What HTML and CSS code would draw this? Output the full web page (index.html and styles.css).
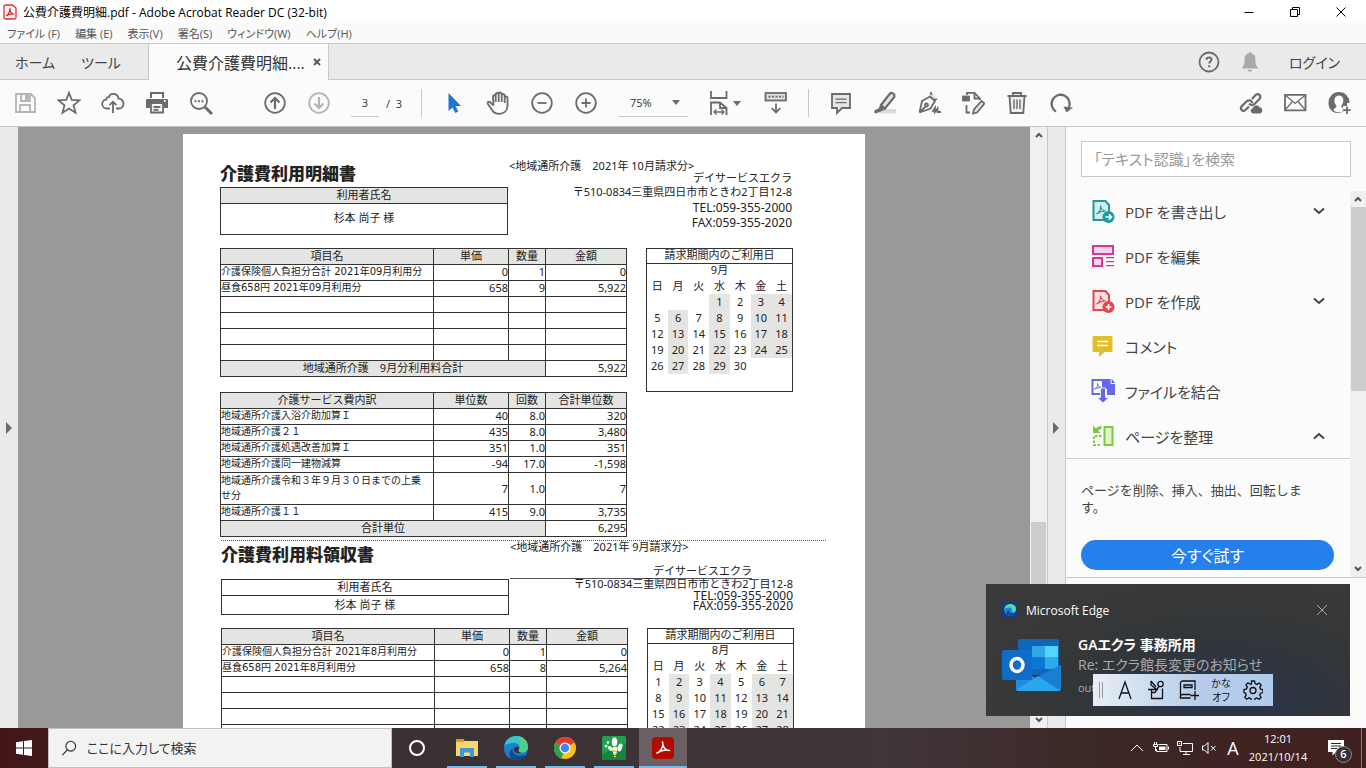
FILE: index.html
```html
<!DOCTYPE html>
<html lang="ja">
<head>
  <meta charset="UTF-8">
  <title>公費介護費明細.pdf - Adobe Acrobat Reader DC (32-bit)</title>
  <link rel="stylesheet" href="styles.css">
</head>
<body>
  <header class="titlebar">
    <svg class="app-icon" viewBox="0 0 14 16"><path d="M2.500 1h7L13 4v9.500a1.500 1.500 0 0 1-1.500 1.500h-9A1.500 1.500 0 0 1 1 13.500v-11A1.500 1.500 0 0 1 2.500 1z" fill="#fff4f2" stroke="#d8352c" stroke-width="1.300"/><path d="M3.300 11.800C5 11 7 7.500 7 4.500c0 3 1.500 5.500 4 5.500-2.500-.3-5.500.3-7.700 1.800z" fill="none" stroke="#d8251c" stroke-width="1.200" stroke-linejoin="round"/></svg>
    <h1 class="window-title">公費介護費明細.pdf - Adobe Acrobat Reader DC (32-bit)</h1>
    <div class="window-buttons">
      <button aria-label="最小化"><svg viewBox="0 0 12 12"><path d="M1.500 6.500h9"/></svg></button>
      <button aria-label="元に戻す"><svg viewBox="0 0 12 12"><path d="M1.500 3.500h7v7h-7zM3.500 3.500v-2h7v7h-2"/></svg></button>
      <button aria-label="閉じる"><svg viewBox="0 0 12 12"><path d="M1.500 1.500l9 9M10.500 1.500l-9 9"/></svg></button>
    </div>
  </header>

  <nav class="menubar">
    <button>ファイル (F)</button>
    <button>編集 (E)</button>
    <button>表示(V)</button>
    <button>署名(S)</button>
    <button>ウィンドウ(W)</button>
    <button>ヘルプ(H)</button>
  </nav>

  <nav class="tabbar">
    <button class="tab tab-home">ホーム</button>
    <button class="tab tab-tools">ツール</button>
    <div class="tab-active">
      <button class="tab">公費介護費明細....</button>
      <button class="tab-close" aria-label="タブを閉じる"><svg viewBox="0 0 8 8"><path d="M1 1l6 6M7 1L1 7" stroke="#5a5a5a" stroke-width="2"/></svg></button>
    </div>
    <div class="tab-right">
      <button class="round" aria-label="ヘルプ"><svg viewBox="0 0 24 24"><circle cx="12" cy="12" r="9.500" fill="none" stroke="#6b6b6b" stroke-width="1.800"/><path d="M9.500 9.800c0-3.200 5-3 5-.2 0 1.900-2.300 1.900-2.300 4" fill="none" stroke="#6b6b6b" stroke-width="2"/><rect x="11.200" y="15.200" width="2" height="2" fill="#6b6b6b"/></svg></button>
      <button class="round" aria-label="通知"><svg viewBox="0 0 24 24"><path d="M12 2a1.500 1.500 0 0 1 1.500 1.600C17 4.500 17.500 7 17.500 11c0 4 .8 4.500 2.300 6.500v1H4.200v-1C5.700 15.500 6.500 15 6.500 11c0-4 .5-6.500 4-7.400A1.500 1.500 0 0 1 12 2zM9.800 19.800h4.400a2.200 2 0 0 1-4.400 0z" fill="#a9a9a9"/></svg></button>
      <button class="login">ログイン</button>
    </div>
  </nav>

  <div class="toolbar">
    <div class="tools tools-file">
      <button aria-label="保存" class="dim"><svg viewBox="0 0 24 24"><path d="M3 3h15l4 4v14H3zM8 3v7h9V3M7 21v-7h10v7"/><path d="M13 4h2v4h-2z" class="solid"/></svg></button>
      <button aria-label="お気に入り"><svg viewBox="0 0 24 24"><path d="M12 1.800l2.800 7.200 7.700.4-6 4.900 2 7.500-6.500-4.200-6.500 4.200 2-7.500-6-4.900 7.700-.4z"/></svg></button>
      <button aria-label="アップロード"><svg viewBox="0 0 24 24"><path d="M9 17.500H6a4.500 4.500 0 0 1-.6-9C5.400 6.500 7 5.700 8 6c1-4.500 9-4.500 9.500 1.700 6.500-.2 6.500 9.800.5 9.800h-3M12 22v-11M8.500 14.200L12 10.700l3.500 3.500"/></svg></button>
      <button aria-label="印刷"><svg viewBox="0 0 24 24"><path d="M5 1h14v6h-2V3H7v4H5zM2 8h20a1 1 0 0 1 1 1v8h-4v-4H5v4H1V9a1 1 0 0 1 1-1z" class="solid nostroke"/><path d="M6 13v8.500h12V13M8.500 16h7M8.500 18.800h5"/><path d="M19 10h1.500" stroke="#fff"/></svg></button>
      <button aria-label="検索"><svg viewBox="0 0 24 24"><circle cx="10" cy="10" r="8"/><path d="M16 16l7 7" stroke-width="3"/><path d="M5.500 9.200h2v2h-2zM9 9.200h2v2H9zM12.500 9.200h2v2h-2z" class="solid nostroke"/></svg></button>
    </div>
    <div class="tools tools-page">
      <button aria-label="前のページ"><svg viewBox="0 0 24 24"><circle cx="12" cy="12" r="9.800"/><path d="M12 18V7M7.500 11.500L12 7l4.500 4.500" stroke-width="2.200"/></svg></button>
      <button aria-label="次のページ" class="dim"><svg viewBox="0 0 24 24"><circle cx="12" cy="12" r="9.800"/><path d="M12 6v11M7.500 12.500L12 17l4.500-4.500" stroke-width="2.200"/></svg></button>
      <input class="page-input" type="text" value="3" aria-label="ページ番号">
      <span class="page-total">/&nbsp; 3</span>
    </div>
    <div class="tools tools-view">
      <button aria-label="選択"><svg viewBox="0 0 24 24"><path d="M6.500 2v18l4-3.600 2.800 5.600 3-1.400-2.800-5.500h5.500z" fill="#1f75cf" stroke="none"/></svg></button>
      <button aria-label="手のひら"><svg viewBox="0 0 24 24"><path d="M7.500 14.500L4 11.200c-1.500-1.200-3.200.3-2 2l4.500 6.300c1.200 2.200 3.500 3.300 6.500 3.300 5 0 8.500-3 8.500-8V7c0-2-2.800-2-2.800 0v5M18.700 12V4.500c0-2-3-2-3 0V11M15.700 4.500V3c0-2-3-2-3 0v8M12.700 3.500c0-2-3-2-3 0V11M9.700 5.500c0-1.800-2.700-1.800-2.700 0l.5 9"/></svg></button>
      <button aria-label="縮小"><svg viewBox="0 0 24 24"><circle cx="12" cy="12" r="9.800"/><path d="M7.500 12h9"/></svg></button>
      <button aria-label="拡大"><svg viewBox="0 0 24 24"><circle cx="12" cy="12" r="9.800"/><path d="M7.500 12h9M12 7.500v9"/></svg></button>
      <div class="zoom-box">
        <select class="zoom-select" aria-label="倍率"><option>75%</option></select>
        <svg class="caret" viewBox="0 0 8 5"><path d="M0 0h8L4 5z"/></svg>
      </div>
      <button class="fit" aria-label="幅に合わせる"><svg viewBox="0 0 24 24"><path d="M4 0v7h15.500V0M4 24V11.500h9l6.500 5.500v7M13 11.500V17h6.500"/><path d="M7 21h10M9.500 18.500L7 21l2.500 2.500M14.500 18.500L17 21l-2.500 2.500" stroke-width="1.300"/></svg><svg class="caret" viewBox="0 0 8 5"><path d="M0 0h8L4 5z"/></svg></button>
      <button class="keys" aria-label="ツールバー"><svg viewBox="0 0 24 24"><rect x="1.500" y="2" width="20.500" height="7.500" fill="#ddd"/><path d="M4.500 5.700h15" stroke-dasharray="2 1.500"/><path d="M12 12.500V21M7.800 17.200L12 21.500l4.200-4.300"/></svg></button>
    </div>
    <div class="tools tools-edit">
      <button aria-label="コメント"><svg viewBox="0 0 24 24"><path d="M3 3h18v14h-8l-5 5v-5H3z" fill="#e6e6e6"/><path d="M6.500 8.200h11M6.500 11.700h11" stroke-width="1.300"/></svg></button>
      <button aria-label="ハイライト"><svg viewBox="0 0 24 24"><path d="M11 18h12v4.500H6z" fill="#dadada" stroke="none"/><path d="M8 14L17 2.500c2-1.500 5 .7 4.500 3.200L12 17.500z" fill="#e6e6e6" stroke-width="2.200"/><path d="M7.500 13.500l5.500 4.200-4.500 2.500-5 2H1.500v-3l4-1.700z" class="solid nostroke"/></svg></button>
      <button aria-label="署名"><svg viewBox="0 0 24 24"><path d="M13.500 1.500l6.500 6.500-3 2-5.500-5z" fill="#ddd" stroke="none"/><path d="M2.500 21.500L5 10l8-4.500 5 4.500-4.500 7.500-11 4L9 15M13.500 1l1.200 3M20 8l-3 1"/><circle cx="9.500" cy="14" r="1.500"/><path d="M15.500 21l2.500-4v4l2.500-3.500v3.500H24"/></svg></button>
      <button aria-label="編集"><svg viewBox="0 0 24 24"><path d="M6 4V1.800h7.500L19 7.500V9M13.500 2v5.500H19M5.500 14v7.500H9"/><rect x="2" y="5.500" width="6" height="4" class="solid"/><path d="M12 22.500l1-4L20.500 10l3 2.500-7.500 9z" fill="#e6e6e6"/></svg></button>
      <button aria-label="削除"><svg viewBox="0 0 24 24"><path d="M2.500 5h19M8 5V2h8v3M4.500 5l1.200 17h12.600l1.200-17" fill="#eee"/><path d="M9 8.500V18M12 8.500V18M15 8.500V18" stroke-width="1.400"/></svg></button>
      <button aria-label="回転"><svg viewBox="0 0 24 24"><path d="M7 20.500A9 9 0 1 1 20 16" stroke-width="2.300"/><path d="M14.500 15.500l9.500 1-6.500 5z" class="solid nostroke"/></svg></button>
    </div>
    <div class="tools tools-share">
      <button aria-label="リンク"><svg viewBox="0 0 24 24"><path d="M10 15.500L6.500 19c-3 2.500-6-1-3.800-3.700l5-5c2.300-2 5.800-.7 5.300 2M13 8l3.500-4c3-2.500 6.500 1 4 4l-5 5c-2 1.800-4.500 1-5.200-.5" stroke-width="2.200"/><path d="M14 22.500a2.800 2.800 0 0 1 0-5.500c1-3.500 5.500-3.500 6.300-.7 3.700-.3 4.200 6.200.2 6.200z" class="solid nostroke"/></svg></button>
      <button aria-label="メール"><svg viewBox="0 0 24 24"><path d="M2 3.800h20.500v15.500H2z"/><path d="M2 4l10.200 8.500L22.500 4M2 19l7.500-8.500M22.500 19L15 10.500" stroke-width="1.300"/></svg></button>
      <button aria-label="ユーザー"><svg viewBox="0 0 24 24"><path d="M12 1a10.500 10.500 0 0 1 10.500 11H20v3h-4v4.500h1.500c-9 6.500-16-.5-16-7.500A10.500 10.500 0 0 1 12 1z" class="solid nostroke"/><path d="M6.500 19.500c0-2.500 3-2.500 3-4.500C5.500 10 7.500 4.500 12 4.500S18 10 14.300 15c0 2 1 1.500 1.500 2v3.500c-3 1.500-6.500 1-9.300-1z" fill="#fff" stroke="none"/><path d="M20 15.500v7.500M16.200 19.200h7.600"/></svg></button>
    </div>
  </div>

  <main class="workspace">
    <button class="strip strip-left" aria-label="ナビゲーションパネル"><svg viewBox="0 0 6 12"><path d="M0 0l6 6-6 6z"/></svg></button>

    <div class="canvas">
      <article class="sheet">
        <section class="bill">
          <div class="bill-head">
            <div class="bill-left">
              <h2>介護費利用明細書</h2>
              <table class="ruled name-table">
                <tr><th class="shade">利用者氏名</th></tr>
                <tr><td class="client">杉本 尚子 様</td></tr>
              </table>
            </div>
            <div class="sender">
              <p class="period">&lt;地域通所介護　2021年 10月請求分&gt;</p>
              <p class="company">デイサービスエクラ</p>
              <p>〒510-0834三重県四日市市ときわ2丁目12-8</p>
              <p class="tel">TEL:059-355-2000</p>
              <p class="tel">FAX:059-355-2020</p>
            </div>
          </div>
          <div class="bill-body">
            <div class="bill-tables">
              <table class="ruled items">
                <tr class="shade"><th class="c-name">項目名</th><th class="c-unit">単価</th><th class="c-qty">数量</th><th class="c-sum">金額</th></tr>
                <tr><td>介護保険個人負担分合計 2021年09月利用分</td><td>0</td><td>1</td><td>0</td></tr>
                <tr><td>昼食658円 2021年09月利用分</td><td>658</td><td>9</td><td>5,922</td></tr>
                <tr><td></td><td></td><td></td><td></td></tr>
                <tr><td></td><td></td><td></td><td></td></tr>
                <tr><td></td><td></td><td></td><td></td></tr>
                <tr><td></td><td></td><td></td><td></td></tr>
                <tr><th colspan="3" class="shade">地域通所介護　9月分利用料合計</th><td>5,922</td></tr>
              </table>
              <table class="ruled items">
                <tr class="shade"><th class="c-name">介護サービス費内訳</th><th class="c-unit">単位数</th><th class="c-qty">回数</th><th class="c-sum">合計単位数</th></tr>
                <tr><td>地域通所介護入浴介助加算Ｉ</td><td>40</td><td>8.0</td><td>320</td></tr>
                <tr><td>地域通所介護２１</td><td>435</td><td>8.0</td><td>3,480</td></tr>
                <tr><td>地域通所介護処遇改善加算Ｉ</td><td>351</td><td>1.0</td><td>351</td></tr>
                <tr><td>地域通所介護同一建物減算</td><td>-94</td><td>17.0</td><td>-1,598</td></tr>
                <tr class="two-line"><td>地域通所介護令和３年９月３０日までの上乗<br>せ分</td><td>7</td><td>1.0</td><td>7</td></tr>
                <tr><td>地域通所介護１１</td><td>415</td><td>9.0</td><td>3,735</td></tr>
                <tr><th colspan="3" class="shade">合計単位</th><td>6,295</td></tr>
              </table>
            </div>
            <div class="calendar">
              <h3>請求期間内のご利用日</h3>
              <table>
                <caption>9月</caption>
                <tr><th>日</th><th>月</th><th>火</th><th>水</th><th>木</th><th>金</th><th>土</th></tr>
                <tr><td></td><td></td><td></td><td class="on">1</td><td>2</td><td class="on">3</td><td class="on">4</td></tr>
                <tr><td>5</td><td class="on">6</td><td>7</td><td class="on">8</td><td>9</td><td class="on">10</td><td class="on">11</td></tr>
                <tr><td>12</td><td class="on">13</td><td>14</td><td class="on">15</td><td>16</td><td class="on">17</td><td class="on">18</td></tr>
                <tr><td>19</td><td class="on">20</td><td>21</td><td class="on">22</td><td>23</td><td class="on">24</td><td class="on">25</td></tr>
                <tr><td>26</td><td class="on">27</td><td>28</td><td class="on">29</td><td>30</td><td></td><td></td></tr>
              </table>
            </div>
          </div>
        </section>

        <section class="bill receipt">
          <div class="bill-head">
            <div class="bill-left">
              <h2>介護費利用料領収書</h2>
              <table class="ruled name-table">
                <tr><th>利用者氏名</th></tr>
                <tr><td class="client">杉本 尚子 様</td></tr>
              </table>
            </div>
            <div class="sender">
              <p class="period">&lt;地域通所介護　2021年 9月請求分&gt;</p>
              <p class="company">デイサービスエクラ</p>
              <p class="address">〒510-0834三重県四日市市ときわ2丁目12-8</p>
              <p class="tel">TEL:059-355-2000</p>
              <p class="tel">FAX:059-355-2020</p>
            </div>
          </div>
          <div class="bill-body">
            <div class="bill-tables">
              <table class="ruled items">
                <tr class="shade"><th class="c-name">項目名</th><th class="c-unit">単価</th><th class="c-qty">数量</th><th class="c-sum">金額</th></tr>
                <tr><td>介護保険個人負担分合計 2021年8月利用分</td><td>0</td><td>1</td><td>0</td></tr>
                <tr><td>昼食658円 2021年8月利用分</td><td>658</td><td>8</td><td>5,264</td></tr>
                <tr><td></td><td></td><td></td><td></td></tr>
                <tr><td></td><td></td><td></td><td></td></tr>
                <tr><td></td><td></td><td></td><td></td></tr>
                <tr><td></td><td></td><td></td><td></td></tr>
              </table>
            </div>
            <div class="calendar">
              <h3>請求期間内のご利用日</h3>
              <table>
                <caption>8月</caption>
                <tr><th>日</th><th>月</th><th>火</th><th>水</th><th>木</th><th>金</th><th>土</th></tr>
                <tr><td>1</td><td class="on">2</td><td>3</td><td class="on">4</td><td>5</td><td class="on">6</td><td class="on">7</td></tr>
                <tr><td>8</td><td class="on">9</td><td>10</td><td class="on">11</td><td>12</td><td class="on">13</td><td class="on">14</td></tr>
                <tr><td>15</td><td class="on">16</td><td>17</td><td class="on">18</td><td>19</td><td class="on">20</td><td class="on">21</td></tr>
                <tr><td>22</td><td class="on">23</td><td>24</td><td class="on">25</td><td>26</td><td class="on">27</td><td class="on">28</td></tr>
              </table>
            </div>
          </div>
        </section>
      </article>
    </div>

    <div class="scrollbar doc-scroll">
      <svg class="arrow" viewBox="0 0 8 6"><path d="M1 5l3-3 3 3"/></svg>
      <div class="thumb"></div>
      <svg class="arrow" viewBox="0 0 8 6"><path d="M1 1l3 3 3-3"/></svg>
    </div>
    <button class="strip strip-right" aria-label="ツールパネル"><svg viewBox="0 0 6 12"><path d="M0 0l6 6-6 6z"/></svg></button>

    <aside class="side">
      <input class="side-search" type="text" placeholder="「テキスト認識」を検索" aria-label="ツールを検索">
      <div class="side-body">
        <div class="side-content">
          <ul class="side-list">
            <li><button>
              <svg class="tool-icon" viewBox="0 0 24 24"><path d="M2.500 2h12l3.500 4v15H2.500z" fill="#d3ebea" stroke="#1d9a9c" stroke-width="2"/><path d="M5.500 15c3-1.500 4.500-5 4-8.500.5 3 2 5 5 5.500-3.500 0-6.500 1-9 3z" fill="none" stroke="#1d9a9c" stroke-width="1.100"/><circle cx="17.500" cy="18" r="6" fill="#1d9a9c"/><path d="M14.500 18h6M17.800 15.200l2.800 2.800-2.800 2.800" fill="none" stroke="#fff" stroke-width="1.500"/></svg>
              <span>PDF を書き出し</span><svg class="chev" viewBox="0 0 12 8"><path d="M1 1.500l5 4.500 5-4.500"/></svg></button></li>
            <li><button>
              <svg class="tool-icon" viewBox="0 0 24 24"><g fill="#f7d3ea" stroke="#d83790" stroke-width="2"><path d="M2 2h20v8H2zM2 14h9v8H2z"/></g><path d="M15 13.700h8M15 17.700h8M15 21.700h8" stroke="#d83790" stroke-width="1.200"/></svg>
              <span>PDF を編集</span></button></li>
            <li><button>
              <svg class="tool-icon" viewBox="0 0 24 24"><path d="M2.500 2h12l3.500 4v15H2.500z" fill="#fadfe0" stroke="#e34850" stroke-width="2"/><path d="M5.500 15c3-1.500 4.500-5 4-8.500.5 3 2 5 5 5.500-3.500 0-6.500 1-9 3z" fill="none" stroke="#e34850" stroke-width="1.100"/><circle cx="17.500" cy="18" r="6" fill="#e34850"/><path d="M14.500 18h6M17.500 15v6" stroke="#fff" stroke-width="1.600"/></svg>
              <span>PDF を作成</span><svg class="chev" viewBox="0 0 12 8"><path d="M1 1.500l5 4.500 5-4.500"/></svg></button></li>
            <li><button>
              <svg class="tool-icon" viewBox="0 0 24 24"><path d="M3 2h17a1.500 1.500 0 0 1 1.500 1.500v13A1.500 1.500 0 0 1 20 18h-6.500L8 23v-5H3a1.500 1.500 0 0 1-1.500-1.500v-13A1.500 1.500 0 0 1 3 2z" fill="#dfbf2a"/><path d="M6 7.500h11M6 11.500h11" stroke="#fff" stroke-width="1.600"/></svg>
              <span>コメント</span></button></li>
            <li><button>
              <svg class="tool-icon" viewBox="0 0 24 24"><path d="M12.500 0h8.500l3 4v12h-8v-6h-3.500z" fill="#6767ec"/><path d="M20 0v4.500h4" fill="none" stroke="#fff" stroke-width="1"/><path d="M1.500 1H12v14H1.500z" fill="#fff" stroke="#6767ec" stroke-width="2"/><path d="M3.500 10c2.500-1.500 3.500-3 3-5.500.3 2 1.500 3.500 3.500 4-2.500 0-4.500.5-6.500 1.500z" fill="none" stroke="#6767ec"/><path d="M9.500 9h5v9.500h3.500L12 24l-6-5.500h3.500z" fill="#6767ec" stroke="#fff" stroke-width=".8"/></svg>
              <span>ファイルを結合</span></button></li>
            <li><button>
              <svg class="tool-icon" viewBox="0 0 24 24"><path d="M13.500 3h8v18h-8z" fill="#e2f2d2" stroke="#7fc93b" stroke-width="2"/><path d="M10.500 12H3v9h7.500" fill="none" stroke="#7fc93b" stroke-width="2" stroke-dasharray="2.500 1.500"/><path d="M2 1.500v7.500h7.500L7.300 6.800c1-1.200 2-1.800 3.200-2V2C8.300 2.300 6.200 3 4.800 4.300z" fill="#7fc93b"/></svg>
              <span>ページを整理</span><svg class="chev" viewBox="0 0 12 8"><path d="M1 6.500L6 2l5 4.500"/></svg></button></li>
          </ul>
          <div class="side-detail">
            <p>ページを削除、挿入、抽出、回転します。</p>
            <button class="try">今すぐ試す</button>
          </div>
        </div>
        <div class="scrollbar side-scroll">
          <svg class="arrow" viewBox="0 0 8 6"><path d="M1 5l3-3 3 3"/></svg>
          <div class="thumb"></div>
          <svg class="arrow" viewBox="0 0 8 6"><path d="M1 1l3 3 3-3"/></svg>
        </div>
      </div>
    </aside>
  </main>

  <footer class="taskbar">
    <button class="start" aria-label="スタート"><svg viewBox="0 0 16 16"><path d="M0 2.200l7-1v6.300H0zM8 1.100L16 0v7.500H8zM0 8.500h7v6.300l-7-1zM8 8.500h8V16l-8-1.100z" fill="#fff"/></svg></button>
    <label class="task-search">
      <svg viewBox="0 0 18 18"><circle cx="11" cy="7" r="5.500"/><path d="M7.200 11L1.500 17"/></svg>
      <input type="text" placeholder="ここに入力して検索" aria-label="検索">
    </label>
    <div class="task-apps">
      <button class="cortana" aria-label="Cortana"><svg viewBox="0 0 24 24"><circle cx="12" cy="12" r="7" fill="none" stroke="#fff" stroke-width="2"/></svg></button>
      <button class="open" aria-label="エクスプローラー"><svg viewBox="0 0 24 24"><path d="M1 3h7l1.500 2H23v15H1z" fill="#fbd56b"/><path d="M1 3h7l1.500 2-1.500 1H1z" fill="#dc9a1c"/><path d="M5 12h14v9h-4v-4.500H9V21H5z" fill="#3f97dc"/></svg></button>
      <button class="open" aria-label="Edge"><svg viewBox="0 0 24 24"><circle cx="12" cy="12" r="12" fill="#1b7fd0"/><path d="M.3 10C1.500 3 7 0 12 0c7 0 12 5 12 10.500 0 4-3 6-6 6s-4-1.500-3-2.500c2-2.500 0-7-5-7S1.500 8.500.3 10z" fill="#39c5cf"/><path d="M14 0c6 .8 10 5.500 10 10.500 0 4-3 6-6 6s-4-1.500-3-2.500c1.500-2 1.500-7-1-14z" fill="#58cf7e" opacity=".8"/><path d="M8.500 13.500c0 5 5 7.500 11 5.500l2.500.5c-3.500 4.500-9 5.500-14 3.500-4-3-3-9 .5-9.500z" fill="#114a8b"/><path d="M13 10.800c2 0 2.500 2 1.500 3.500-.7 1.500 1 2.500 3.500 2.700-5 1.500-8.500-1-8-4 .3-1.500 1.500-2.200 3-2.200z" fill="#3b3233"/></svg></button>
      <button class="open" aria-label="Chrome"><svg viewBox="0 0 24 24"><circle cx="12" cy="12" r="11" fill="#fbc116"/><path d="M12 12L2.500 6.500A11 11 0 0 1 21.500 6.500z" fill="#e33b2e"/><path d="M12 12l-3.500 10.500A11 11 0 0 1 2.500 6.500z" fill="#2fa04f"/><circle cx="12" cy="12" r="5.500" fill="#fff"/><circle cx="12" cy="12" r="4.300" fill="#4486f4"/></svg></button>
      <button class="open" aria-label="業務ソフト"><svg viewBox="0 0 24 24"><rect width="24" height="24" rx="2" fill="#1fa24e"/><path d="M0 18L24 8v14a2 2 0 0 1-2 2H2a2 2 0 0 1-2-2z" fill="#138540"/><g fill="#fff"><ellipse cx="12.500" cy="6" rx="2.700" ry="4.500"/><ellipse cx="18" cy="11.500" rx="2.300" ry="4" transform="rotate(20 18 11.500)"/><ellipse cx="8.500" cy="12.500" rx="3" ry="1.800" transform="rotate(35 8.500 12.500)"/><circle cx="4" cy="10" r="1.500"/><circle cx="6" cy="6.500" r="1.200"/><path d="M11 11h4v5l-2 3.500-2-2z"/></g><path d="M10.500 15h4.500M11 18h3.500M12 20.500h2" stroke="#e8cc25" stroke-width="1.300"/></svg></button>
      <button class="open current" aria-label="Acrobat"><svg viewBox="0 0 24 24"><rect x="1" y="1" width="22" height="22" rx="4" fill="#b30b00"/><path d="M6 17c4-1.500 7-7 5.500-11 0 5 3 8.500 7 8.500-4-1-8.500 0-12.500 2.500z" fill="none" stroke="#fff" stroke-width="1.500" stroke-linejoin="round"/></svg></button>
    </div>
    <div class="tray">
      <button aria-label="隠れているインジケーター"><svg viewBox="0 0 16 16"><path d="M2 11l6-6 6 6"/></svg></button>
      <button aria-label="電源"><svg viewBox="0 0 16 16"><path d="M5.500 4.500H14v7H3.500V9M15.500 6.500v3M1.500 2v2M3.500 2v2M.5 4.500h4v2h-4zM2.500 7v4"/><path d="M6 6.500h6.500V10H6z" fill="#fff" stroke="none"/></svg></button>
      <button aria-label="ネットワーク"><svg viewBox="0 0 16 16"><path d="M6 3.500h9.500v8H3V7M9 12v2M6 14.500h7M.5 1.500h4v4h-4zM2.500 3v1"/></svg></button>
      <button aria-label="音量"><svg viewBox="0 0 16 16"><path d="M1.500 6h2L7 2.500v11L3.500 10h-2zM10 6l4.500 4.500M14.500 6L10 10.500"/></svg></button>
      <button class="ime-letter">A</button>
      <button class="clock"><span>12:01</span><span>2021/10/14</span></button>
      <button class="action" aria-label="アクションセンター">
        <svg viewBox="0 0 16 16"><path d="M0 0h16v12H8l-3.500 3.500V12H0z" fill="#fff" stroke="none"/><path d="M3 3.500h10M3 6h10M3 8.500h6" stroke="#3a2222"/></svg>
        <span class="count">6</span>
      </button>
      <span class="desktop"></span>
    </div>
  </footer>

  <div class="toast" role="alert">
    <div class="toast-head">
      <svg viewBox="0 0 16 16"><rect width="16" height="16" fill="#173a7c"/><circle cx="8" cy="8" r="6" fill="#1a82d8"/><path d="M2 7.500C3 3.500 6 2 8.500 2c3.500 0 5.700 2.500 5.700 5 0 3.500-4.500 3.500-4.500 2 1-2-.5-3.500-2.700-3.500S3 6.500 2 7.500z" fill="#5bd6a5"/><path d="M7 8.500c0 2.500 3 3.500 6 2.200-2 3.500-6 4-8 2C3.500 11 5 8.500 7 8.500z" fill="#0e4c94"/></svg>
      <span>Microsoft Edge</span>
      <button aria-label="閉じる"><svg viewBox="0 0 12 12"><path d="M1 1l10 10M11 1L1 11"/></svg></button>
    </div>
    <div class="toast-body">
      <svg class="outlook" viewBox="0 0 60 54"><rect x="16" y="1" width="41" height="36" rx="2" fill="#1067b8"/><path d="M30 8h13v11H30z" fill="#31a6e8"/><path d="M43 8h13v11H43z" fill="#51d6ff"/><path d="M30 19h13v12H30z" fill="#0a79d6"/><path d="M43 19h13v12H43z" fill="#2fa8ec"/><path d="M14 32l23 9L59 27v24a2 2 0 0 1-2 2H16a2 2 0 0 1-2-2z" fill="#1d8fe0"/><path d="M59 27v25L35 39z" fill="#1a7fd4"/><path d="M14 52l22-14 22 15H16z" fill="#2ba6ec"/><rect y="12" width="30" height="30" rx="2" fill="#0f6cc9"/><ellipse cx="15" cy="27" rx="6" ry="6.500" fill="none" stroke="#fff" stroke-width="3.500"/></svg>
      <div class="toast-text">
        <strong>GAエクラ 事務所用</strong>
        <span>Re: エクラ館長変更のお知らせ</span>
        <small>out</small>
      </div>
    </div>
  </div>

  <div class="ime-bar">
    <span class="grip"></span>
    <button aria-label="半角英数"><svg viewBox="0 0 20 20"><path d="M4 19l6-17 6 17M6 13h8"/></svg></button>
    <button aria-label="IMEパッド"><svg viewBox="0 0 20 20"><path d="M4.500 9.500v9h11v-10M1 9.500h10M4 1v4l5 4M4 1l5 6M4 12.500h4a2 2 0 0 0 0-3.500"/><circle cx="13.500" cy="4" r="2.700"/><path d="M12 6.500l-3 4"/></svg></button>
    <button aria-label="単語登録"><svg viewBox="0 0 20 20"><path d="M16 10V1H3.500A2 2 0 0 0 1.500 3v15h10M1.500 18a2.500 2.500 0 0 1 2-3.500h8M5 5h8v2.500H5zM16 11v9M11.500 15.500h9"/></svg></button>
    <button class="kana"><span>かな</span><span>オフ</span></button>
    <button aria-label="設定"><svg viewBox="0 0 20 20"><path d="M8.500 1h3l.6 2.600 1.800.8 2.300-1.400 2 2-1.400 2.300.8 1.800 2.400.6v2.900l-2.500.6-.8 1.800 1.400 2.300-2 2-2.300-1.400-1.800.8-.6 2.300h-3l-.5-2.400-1.800-.8-2.300 1.400-2-2 1.400-2.300-.8-1.800L1 12.500v-3l2.500-.6.8-1.800L3 4.800l2-2 2.300 1.400 1.200-.5z"/><circle cx="10" cy="10.500" r="3"/></svg></button>
  </div>
</body>
</html>
```
FILE: styles.css
```css
* { box-sizing: border-box; }
body {
  margin: 0;
  height: 100vh;
  display: flex;
  flex-direction: column;
  overflow: hidden;
  font-family: "Open Sans", "Noto Sans CJK JP", sans-serif;
  font-feature-settings: "palt";
  font-size: 12px;
  color: #333;
  background: #fbfbfb;
}
button, input, select { font: inherit; font-feature-settings: inherit; color: inherit; border: 0; padding: 0; margin: 0; background: none; border-radius: 0; }
h1, h2, h3, p, ul { margin: 0; padding: 0; }
svg { display: block; flex: none; }

/* title bar */
.titlebar { display: flex; align-items: center; flex: none; height: 23px; padding: 0 2px 0 3px; background: #fff; }
.app-icon { width: 14px; height: 16px; }
.window-title { flex: 1; margin-left: 6px; font-size: 12px; font-weight: 400; color: #000; white-space: nowrap; }
.window-buttons { display: flex; }
.window-buttons button { width: 46px; height: 20px; display: flex; align-items: center; justify-content: center; }
.window-buttons svg { width: 12px; height: 12px; fill: none; stroke: #000; }

.menubar { display: flex; align-items: center; flex: none; gap: 15px; height: 20px; padding-left: 7px; font-size: 11px; color: #555; background: #fafafa; }

/* tabs */
.tabbar { display: flex; flex: none; height: 37px; border-top: 1px solid #c8c8c8; background: #eaeaea; font-size: 14px; color: #444; }
.tabbar > .tab, .tab-right { border-bottom: 1px solid #c8c8c8; }
.tab-home { width: 70px; }
.tab-tools { width: 78px; padding-right: 16px; }
.tab-active { display: flex; align-items: center; width: 181px; padding-left: 27px; border: solid #c8c8c8; border-width: 0 1px; background: #fbfbfb; color: #333; font-size: 16px; }
.tab-active .tab { flex: 1; min-width: 0; text-align: left; white-space: nowrap; }
.tab-close { width: 22px; padding: 0 7px; }
.tab-close svg { width: 8px; height: 8px; }
.tab-right { flex: 1; display: flex; align-items: center; justify-content: flex-end; padding-right: 26px; }
.round { width: 41px; display: flex; justify-content: center; }
.round svg { width: 24px; height: 24px; }
.login { margin-left: 18px; }

/* toolbar */
.toolbar { display: flex; align-items: center; flex: none; height: 47px; border-bottom: 1px solid #c4c4c4; padding-left: 3px; background: #fbfbfb; }
.tools { display: flex; align-items: center; height: 28px; font-size: 11px; }
.tools button { width: 44px; height: 28px; display: flex; align-items: center; justify-content: center; }
.tools svg { width: 24px; height: 24px; fill: none; stroke: #6b6b6b; stroke-width: 1.8; }
.tools .dim svg { stroke: #b4b4b4; }
.tools .solid { fill: #6b6b6b; }
.tools .dim .solid { fill: #b4b4b4; }
.tools .nostroke { stroke: none; }
.tools svg.caret { width: 8px; height: 5px; fill: #6b6b6b; stroke: none; }
.tools-page { margin-left: 30px; width: 168px; }
.page-input { width: 28px; height: 28px; margin-left: 10px; border-bottom: 1px solid #c8c8c8; text-align: center; }
.page-total { margin-left: 7px; white-space: nowrap; }
.tools-view { border-left: 1px solid #c8c8c8; padding-left: 10px; }
.zoom-box { display: flex; align-items: center; width: 70px; height: 28px; margin: 0 6px 0 10px; padding-right: 8px; border-bottom: 1px solid #c8c8c8; }
.zoom-select { flex: 1; min-width: 0; appearance: none; padding-left: 12px; }
.tools .fit { gap: 2px; width: 60px; }
.tools .keys { width: 36px; margin: 0 14px 0 4px; }
.tools-edit { border-left: 1px solid #c8c8c8; padding-left: 10px; }
.tools-share { margin-left: auto; padding-right: 5px; }

/* workspace */
.workspace { flex: 1; min-height: 0; display: flex; overflow: hidden; }
.strip { flex: none; width: 18px; padding-left: 6px; background: #eaeaea; }
.strip svg { width: 6px; height: 12px; fill: #6b6b6b; }
.strip-right { border: solid #c8c8c8; border-width: 0 1px; padding-left: 5px; width: 19px; }
.canvas { flex: 1; overflow: hidden; padding-top: 7px; background: #999; }
.sheet {
  width: 682px;
  margin: 0 auto;
  padding: 26px 38px 0 37px;
  background: #fff;
  color: #222;
  font-family: "Noto Sans", "Noto Sans CJK JP", sans-serif;
  font-feature-settings: normal;
  font-size: 11px;
}
.bill { width: 573px; }
.bill-head { display: flex; }
.bill-left { width: 289px; }
.bill h2 { height: 27px; line-height: 27px; font-size: 17px; font-weight: 900; white-space: nowrap; }
.sender { flex: 1; padding-right: 1px; text-align: right; line-height: 16px; white-space: nowrap; }
.sender .period { text-align: left; line-height: 12px; }
.sender .company { line-height: 12px; }
.sender .tel { font-size: 12px; line-height: 15px; }
.bill-body { display: flex; align-items: flex-start; justify-content: space-between; margin-top: 13px; }
.bill-tables { display: grid; gap: 15px; }

.ruled { border-collapse: collapse; table-layout: fixed; }
.ruled th, .ruled td { height: 16px; padding: 0 0 2px; border: 1px solid #333; line-height: 13px; font-weight: 400; }
.shade, .calendar .on { background: #e4e4e2; }
.name-table { width: 288px; text-align: center; }
.ruled .client { height: 31px; line-height: 24px; }
.items { width: 407px; }
.items td { text-align: right; }
.items td:first-child:not(:last-child) { text-align: left; font-family: "DejaVu Sans", "Noto Sans CJK JP", sans-serif; font-size: 10px; white-space: nowrap; }
.items .two-line td { padding-bottom: 1px; line-height: 15px; }
.c-name { width: 213px; }
.c-unit { width: 75px; }
.c-qty { width: 37px; }

.calendar { width: 147px; height: 144px; border: 1px solid #333; }
.calendar h3 { height: 15px; line-height: 12px; border-bottom: 1px solid #333; font-size: 11px; font-weight: 400; text-align: center; }
.calendar table { width: 100%; border-collapse: collapse; table-layout: fixed; }
.calendar caption, .calendar th, .calendar td { height: 16px; padding: 0; line-height: 14px; font-weight: 400; text-align: center; }
.calendar caption { height: 14px; line-height: 12px; }

.receipt { margin-top: 3px; margin-left: 1px; }
.receipt::before { content: ""; display: block; width: 605px; border-top: 1px dotted #555; }
.receipt .name-table { margin-top: 11px; }
.receipt .client { height: 19px; line-height: 15px; }
.receipt .sender, .receipt .sender .tel { line-height: 10px; }
.receipt .sender .period { line-height: 12px; }
.receipt .sender .company { margin: 10px 41px 0 0; line-height: 15px; border-bottom: 1px solid #555; }
.receipt .address { margin-bottom: 2px; }

/* scrollbars */
.scrollbar { display: flex; flex-direction: column; align-items: center; justify-content: space-between; flex: none; background: #f0f0f0; }
.arrow { width: 8px; height: 6px; margin: 5px 0; fill: none; stroke: #555; stroke-width: 2; }
.scrollbar .thumb { width: 15px; background: #cdcdcd; }
.doc-scroll { width: 17px; }
.doc-scroll .thumb { height: 190px; margin-top: auto; }
.side-scroll { width: 16px; }
.side-scroll .thumb { height: 184px; margin-bottom: auto; }

/* tool panel */
.side { flex: none; width: 300px; }
.side-search { display: block; width: 270px; height: 36px; margin: 14px 0 14px 15px; padding-left: 12px; border: 1px solid #c8c8c8; background: #fff; font-size: 15px; }
.side-search::placeholder { color: #999; opacity: 1; }
.side-body { display: flex; height: 387px; border-bottom: 1px solid #c8c8c8; }
.side-content { flex: 1; }
.side-list { list-style: none; height: 268px; border-bottom: 1px solid #d0d0d0; }
.side-list li { margin: 0 16px 5px 15px; }
.side-list button { display: flex; align-items: center; width: 100%; height: 40px; padding: 0 9px 0 10px; font-size: 15px; color: #444; }
.side-list span { flex: 1; margin-left: 10px; text-align: left; }
.tool-icon { width: 24px; height: 24px; }
.chev { width: 12px; height: 8px; fill: none; stroke: #444; stroke-width: 2; }
.side-detail { padding: 23px 16px 0 15px; }
.side-detail p { height: 34px; padding-right: 20px; line-height: 17px; font-size: 13px; color: #444; font-feature-settings: normal; }
.try { width: 100%; height: 30px; margin-top: 24px; border-radius: 15px; background: #2680eb; color: #fff; font-size: 16px; }

/* taskbar */
.taskbar { flex: none; display: flex; height: 40px; background: linear-gradient(90deg, #431616 0%, #3b3133 30%, #40353a 65%, #3c2724 82%, #40201f 100%); color: #fff; }
.start { width: 48px; display: flex; align-items: center; justify-content: center; }
.start svg { width: 16px; height: 16px; }
.task-search { display: flex; align-items: center; width: 344px; padding-left: 12px; border: 1px solid #c0c0c0; background: #f2f2f2; }
.task-search svg { width: 16px; height: 18px; fill: none; stroke: #222; stroke-width: 1.2; }
.task-search input { flex: 1; margin-left: 10px; font-size: 13px; }
.task-search input::placeholder { color: #333; opacity: 1; }
.task-apps { display: flex; gap: 1px; }
.task-apps button { width: 48px; display: flex; align-items: center; justify-content: center; }
.task-apps .cortana { width: 50px; }
.task-apps svg { width: 24px; height: 24px; }
.task-apps .open { background: linear-gradient(#76b9ed, #76b9ed) bottom / 40px 2px no-repeat; }
.task-apps .current { background-color: #6b6063; background-size: 100% 2px; }
.tray { margin-left: auto; display: flex; align-items: center; }
.tray button { width: 24px; height: 40px; display: flex; align-items: center; justify-content: center; }
.tray svg { width: 16px; height: 16px; fill: none; stroke: #fff; }
.tray .ime-letter { font-size: 18px; }
.tray .clock { width: 66px; flex-direction: column; line-height: 18px; font-size: 11px; }
.tray .action { position: relative; width: 50px; }
.count { position: absolute; left: 24px; top: 18px; width: 17px; height: 17px; border: 1px solid #8c8c8c; border-radius: 50%; background: #333; font-size: 11px; line-height: 14px; font-weight: 600; }
.desktop { width: 5px; height: 40px; border-left: 1px solid #8d7878; }

/* notification */
.toast { position: absolute; right: 16px; bottom: 52px; width: 364px; height: 132px; padding: 17px 22px 0 16px; background: radial-gradient(ellipse at 65% 90%, #27344a 0%, #333638 45%, #393939 75%); color: #fff; }
.toast-head { display: flex; align-items: center; height: 18px; }
.toast-head > svg { width: 16px; height: 16px; margin-right: 8px; }
.toast-head button { margin-left: auto; }
.toast-head button svg { width: 12px; height: 12px; stroke: #aaa; }
.toast-body { display: flex; margin-top: 16px; }
.outlook { width: 60px; height: 54px; margin-top: 3px; }
.toast-text { display: flex; flex-direction: column; margin-left: 16px; line-height: 20px; font-size: 14px; color: #a9a9a9; white-space: nowrap; }
.toast-text strong { color: #fff; font-weight: 600; }
.toast-text small { font-size: 11px; line-height: 26px; }

.ime-bar { position: absolute; right: 93px; bottom: 62px; display: flex; align-items: center; width: 180px; height: 32px; padding: 0 4px 0 6px; background: linear-gradient(90deg, #e6edf6, #b5cdea 60%, #b0cbec); color: #111; }
.grip { width: 4px; height: 16px; margin-right: 6px; border: solid #999; border-width: 0 1px; }
.ime-bar button { flex: 1; display: flex; justify-content: center; }
.ime-bar svg { width: 20px; height: 20px; fill: none; stroke: #111; stroke-width: 1.3; }
.ime-bar .kana { flex-direction: column; align-items: center; font-size: 10px; line-height: 14px; }
```
